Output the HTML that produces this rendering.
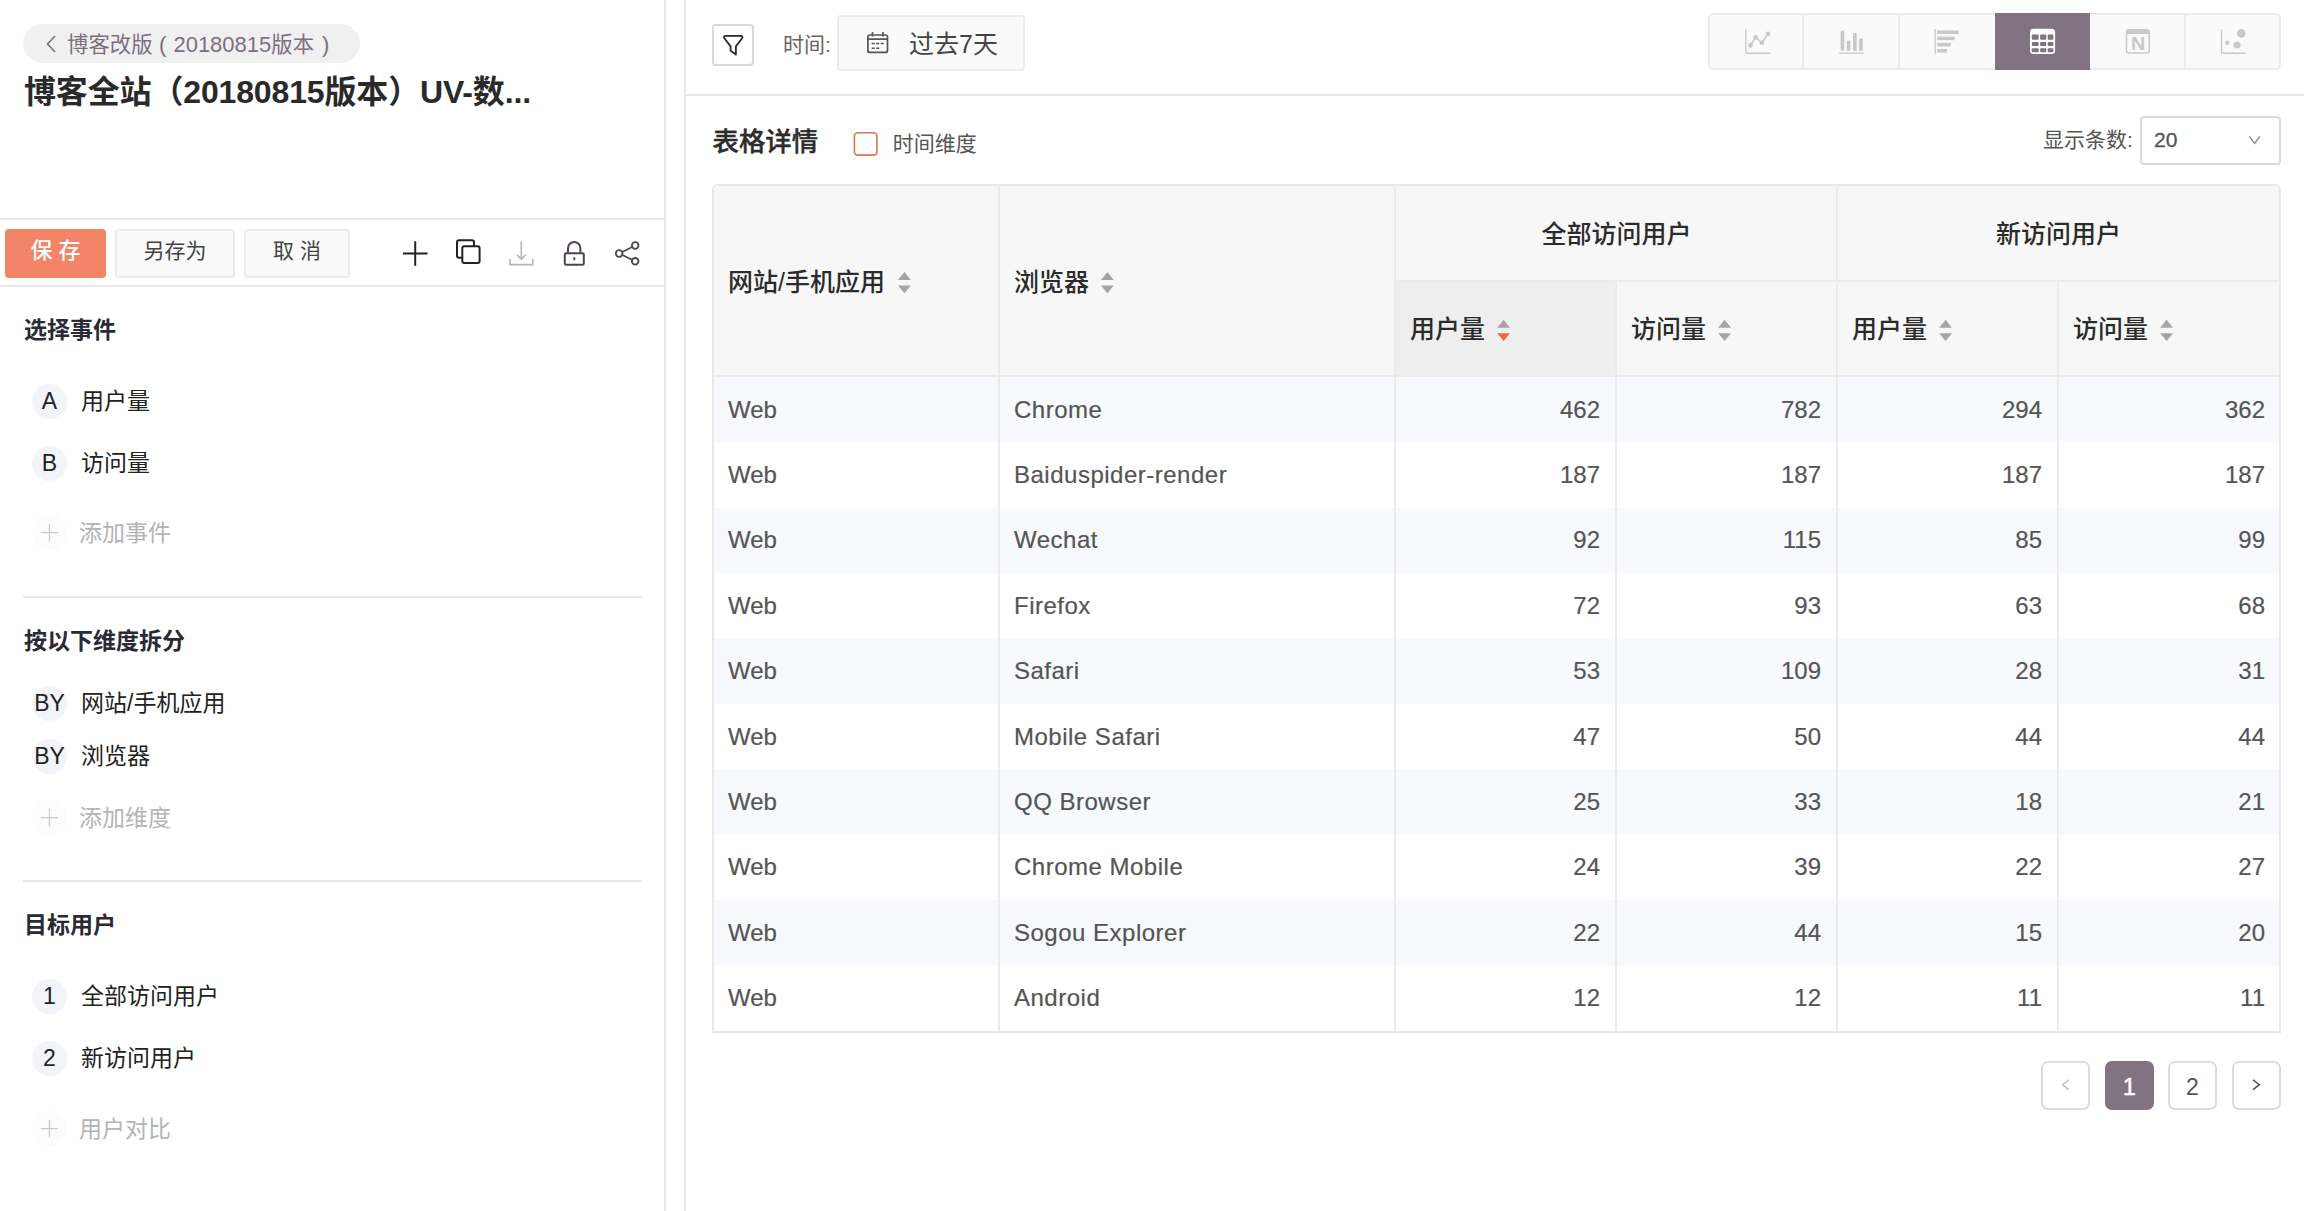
<!DOCTYPE html>
<html lang="zh-CN">
<head>
<meta charset="utf-8">
<title>博客全站（20180815版本）UV-数据</title>
<style>
*{box-sizing:border-box;margin:0;padding:0}
html,body{width:2304px;height:1211px;overflow:hidden;background:#fff}
body{position:relative;font-family:"Liberation Sans","Noto Sans CJK SC",sans-serif;color:#333}
.a{position:absolute}
.t{position:absolute;white-space:nowrap;line-height:40px;height:40px}
.b{font-weight:bold}
.line{position:absolute;background:#e7e7e7}
.circ{position:absolute;width:35px;height:35px;border-radius:50%;background:#f3f3fa;text-align:center;line-height:35px;font-size:23px;color:#222}
.circ.g{background:#fcfcfd}
.item{font-size:23px;color:#222}
.add{font-size:23px;color:#b4b4b4}
.sec{font-size:23px;font-weight:bold;color:#2a2a35}
.btn{position:absolute;top:229px;height:49px;border-radius:4px;font-size:21px;text-align:center;line-height:40px}
.btn.gray{background:#fafafa;border:2px solid #ececec;color:#444}
.td{position:absolute;font-size:24px;color:#555;-webkit-text-stroke:.2px #555;line-height:40px;height:40px;white-space:nowrap}
.br{letter-spacing:.5px}
.num{text-align:right}
.th{position:absolute;font-size:25px;color:#2b2b2b;font-weight:500;line-height:40px;height:40px;white-space:nowrap}
.pg{position:absolute;top:1061px;width:49px;height:49px;border:2px solid #dcdcdc;border-radius:7px;background:#fff;text-align:center;line-height:49px;font-size:23px;color:#555}
#ico{position:absolute;left:0;top:0;width:2304px;height:1211px;pointer-events:none}
</style>
</head>
<body>

<div class="line" style="left:664px;top:0;width:2px;height:1211px"></div>
<div class="line" style="left:684px;top:0;width:2px;height:1211px"></div>
<div class="a" style="left:23px;top:24px;width:337px;height:39px;border-radius:20px;background:#f0f0f0"></div>
<div class="t" style="left:67px;top:25px;font-size:22px;color:#7c6f80"><span style="font-size:21.400px">博客改版</span><span style="margin:0 7px 0 6.500px">(</span>20180815<span style="font-size:21.400px">版本</span><span style="margin:0 0 0 8px">)</span></div>
<div class="t b" style="left:24px;top:72px;font-size:32px;color:#2a2a2a;letter-spacing:-.15px">博客全站（20180815版本）UV-数...</div>
<div class="line" style="left:0;top:218px;width:664px;height:2px"></div>
<div class="line" style="left:0;top:285px;width:664px;height:2px"></div>
<div class="btn" style="left:5px;width:101px;background:#f38468;color:#fff;font-weight:500;font-size:22px;line-height:44px">保 存</div>
<div class="btn gray" style="left:115px;width:120px">另存为</div>
<div class="btn gray" style="left:244px;width:106px">取 消</div>
<div class="t sec" style="left:24px;top:310px">选择事件</div>
<div class="circ" style="left:32px;top:384px">A</div>
<div class="t item" style="left:81px;top:381px">用户量</div>
<div class="circ" style="left:32px;top:446px">B</div>
<div class="t item" style="left:81px;top:443px">访问量</div>
<div class="circ g" style="left:32px;top:515px"></div>
<div class="t add" style="left:79px;top:513px">添加事件</div>
<div class="line" style="left:23px;top:596px;width:619px;height:2px"></div>
<div class="t sec" style="left:24px;top:621px">按以下维度拆分</div>
<div class="circ" style="left:32px;top:686px">BY</div>
<div class="t item" style="left:81px;top:683px">网站/手机应用</div>
<div class="circ" style="left:32px;top:739px">BY</div>
<div class="t item" style="left:81px;top:736px">浏览器</div>
<div class="circ g" style="left:32px;top:800px"></div>
<div class="t add" style="left:79px;top:798px">添加维度</div>
<div class="line" style="left:23px;top:880px;width:619px;height:2px"></div>
<div class="t sec" style="left:24px;top:905px">目标用户</div>
<div class="circ" style="left:32px;top:979px">1</div>
<div class="t item" style="left:81px;top:976px">全部访问用户</div>
<div class="circ" style="left:32px;top:1041px">2</div>
<div class="t item" style="left:81px;top:1038px">新访问用户</div>
<div class="circ g" style="left:32px;top:1111px"></div>
<div class="t add" style="left:79px;top:1109px">用户对比</div>
<div class="line" style="left:686px;top:94px;width:1618px;height:2px"></div>
<div class="a" style="left:712px;top:24px;width:42px;height:42px;border:2px solid #d9d9d9;border-radius:4px;background:#fff"></div>
<div class="t" style="left:783px;top:25px;font-size:21px;color:#666">时间:</div>
<div class="a" style="left:837px;top:15px;width:188px;height:56px;border:2px solid #ececec;border-radius:4px;background:#fafafa"></div>
<div class="t" style="left:909px;top:23.500px;font-size:25px;color:#444">过去7天</div>
<div class="a" style="left:1708px;top:13px;width:573px;height:57px;border:2px solid #ebebeb;border-radius:5px;background:#fafafa"></div>
<div class="line" style="left:1802px;top:15px;width:2px;height:53px;background:#ebebeb"></div>
<div class="line" style="left:1898px;top:15px;width:2px;height:53px;background:#ebebeb"></div>
<div class="line" style="left:2184px;top:15px;width:2px;height:53px;background:#ebebeb"></div>
<div class="a" style="left:1995px;top:13px;width:95px;height:57px;background:#827383"></div>
<div class="t" style="left:712.500px;top:122px;font-size:26.400px;color:#2c2c2c;font-weight:500;-webkit-text-stroke:.4px #2c2c2c">表格详情</div>
<div class="t" style="left:892.700px;top:124px;font-size:21px;color:#555">时间维度</div>
<div class="t" style="left:2043px;top:119.500px;font-size:21px;color:#555">显示条数:</div>
<div class="a" style="left:2140px;top:116px;width:141px;height:49px;border:2px solid #dadada;border-radius:4px;background:#fff"></div>
<div class="t" style="left:2154px;top:119.500px;font-size:21px;color:#555;-webkit-text-stroke:.3px #555">20</div>
<div class="a" style="left:712px;top:184px;width:1569px;height:849px;border:2px solid #e8e8e8;border-radius:6px 6px 0 0;background:#fff"></div>
<div class="a" style="left:714px;top:186px;width:1565px;height:190px;background:#f7f7f7;border-radius:4px 4px 0 0"></div>
<div class="a" style="left:1396px;top:281px;width:220px;height:95px;background:#eeeeee"></div>
<div class="a" style="left:714px;top:377.0px;width:1565px;height:65.4px;background:#f8f9fd"></div>
<div class="a" style="left:714px;top:507.8px;width:1565px;height:65.4px;background:#f8f9fd"></div>
<div class="a" style="left:714px;top:638.6px;width:1565px;height:65.4px;background:#f8f9fd"></div>
<div class="a" style="left:714px;top:769.4px;width:1565px;height:65.4px;background:#f8f9fd"></div>
<div class="a" style="left:714px;top:900.2px;width:1565px;height:65.4px;background:#f8f9fd"></div>
<div class="line" style="left:714px;top:375px;width:1565px;height:2px;background:#ebebeb"></div>
<div class="line" style="left:1396px;top:280px;width:883px;height:2px;background:#ebebeb"></div>
<div class="line" style="left:998px;top:186px;width:2px;height:845px;background:#ebebeb"></div>
<div class="line" style="left:1394px;top:186px;width:2px;height:845px;background:#ebebeb"></div>
<div class="line" style="left:1836px;top:186px;width:2px;height:845px;background:#ebebeb"></div>
<div class="line" style="left:1615px;top:282px;width:2px;height:749px;background:#ebebeb"></div>
<div class="line" style="left:2057px;top:282px;width:2px;height:749px;background:#ebebeb"></div>
<div class="th" style="left:728px;top:262px">网站/手机应用</div>
<div class="th" style="left:1014px;top:262px">浏览器</div>
<div class="th" style="left:1396px;top:214px;width:441px;text-align:center">全部访问用户</div>
<div class="th" style="left:1838px;top:214px;width:441px;text-align:center">新访问用户</div>
<div class="th" style="left:1410px;top:309px">用户量</div>
<div class="th" style="left:1631px;top:309px">访问量</div>
<div class="th" style="left:1852px;top:309px">用户量</div>
<div class="th" style="left:2073px;top:309px">访问量</div>
<div class="td" style="left:728px;top:389.5px">Web</div>
<div class="td br" style="left:1014px;top:389.5px">Chrome</div>
<div class="td num" style="left:1400px;width:200px;top:389.5px">462</div>
<div class="td num" style="left:1621px;width:200px;top:389.5px">782</div>
<div class="td num" style="left:1842px;width:200px;top:389.5px">294</div>
<div class="td num" style="left:2065px;width:200px;top:389.5px">362</div>
<div class="td" style="left:728px;top:454.9px">Web</div>
<div class="td br" style="left:1014px;top:454.9px">Baiduspider-render</div>
<div class="td num" style="left:1400px;width:200px;top:454.9px">187</div>
<div class="td num" style="left:1621px;width:200px;top:454.9px">187</div>
<div class="td num" style="left:1842px;width:200px;top:454.9px">187</div>
<div class="td num" style="left:2065px;width:200px;top:454.9px">187</div>
<div class="td" style="left:728px;top:520.3px">Web</div>
<div class="td br" style="left:1014px;top:520.3px">Wechat</div>
<div class="td num" style="left:1400px;width:200px;top:520.3px">92</div>
<div class="td num" style="left:1621px;width:200px;top:520.3px">115</div>
<div class="td num" style="left:1842px;width:200px;top:520.3px">85</div>
<div class="td num" style="left:2065px;width:200px;top:520.3px">99</div>
<div class="td" style="left:728px;top:585.7px">Web</div>
<div class="td br" style="left:1014px;top:585.7px">Firefox</div>
<div class="td num" style="left:1400px;width:200px;top:585.7px">72</div>
<div class="td num" style="left:1621px;width:200px;top:585.7px">93</div>
<div class="td num" style="left:1842px;width:200px;top:585.7px">63</div>
<div class="td num" style="left:2065px;width:200px;top:585.7px">68</div>
<div class="td" style="left:728px;top:651.1px">Web</div>
<div class="td br" style="left:1014px;top:651.1px">Safari</div>
<div class="td num" style="left:1400px;width:200px;top:651.1px">53</div>
<div class="td num" style="left:1621px;width:200px;top:651.1px">109</div>
<div class="td num" style="left:1842px;width:200px;top:651.1px">28</div>
<div class="td num" style="left:2065px;width:200px;top:651.1px">31</div>
<div class="td" style="left:728px;top:716.5px">Web</div>
<div class="td br" style="left:1014px;top:716.5px">Mobile Safari</div>
<div class="td num" style="left:1400px;width:200px;top:716.5px">47</div>
<div class="td num" style="left:1621px;width:200px;top:716.5px">50</div>
<div class="td num" style="left:1842px;width:200px;top:716.5px">44</div>
<div class="td num" style="left:2065px;width:200px;top:716.5px">44</div>
<div class="td" style="left:728px;top:781.9px">Web</div>
<div class="td br" style="left:1014px;top:781.9px">QQ Browser</div>
<div class="td num" style="left:1400px;width:200px;top:781.9px">25</div>
<div class="td num" style="left:1621px;width:200px;top:781.9px">33</div>
<div class="td num" style="left:1842px;width:200px;top:781.9px">18</div>
<div class="td num" style="left:2065px;width:200px;top:781.9px">21</div>
<div class="td" style="left:728px;top:847.3px">Web</div>
<div class="td br" style="left:1014px;top:847.3px">Chrome Mobile</div>
<div class="td num" style="left:1400px;width:200px;top:847.3px">24</div>
<div class="td num" style="left:1621px;width:200px;top:847.3px">39</div>
<div class="td num" style="left:1842px;width:200px;top:847.3px">22</div>
<div class="td num" style="left:2065px;width:200px;top:847.3px">27</div>
<div class="td" style="left:728px;top:912.7px">Web</div>
<div class="td br" style="left:1014px;top:912.7px">Sogou Explorer</div>
<div class="td num" style="left:1400px;width:200px;top:912.7px">22</div>
<div class="td num" style="left:1621px;width:200px;top:912.7px">44</div>
<div class="td num" style="left:1842px;width:200px;top:912.7px">15</div>
<div class="td num" style="left:2065px;width:200px;top:912.7px">20</div>
<div class="td" style="left:728px;top:978.1px">Web</div>
<div class="td br" style="left:1014px;top:978.1px">Android</div>
<div class="td num" style="left:1400px;width:200px;top:978.1px">12</div>
<div class="td num" style="left:1621px;width:200px;top:978.1px">12</div>
<div class="td num" style="left:1842px;width:200px;top:978.1px">11</div>
<div class="td num" style="left:2065px;width:200px;top:978.1px">11</div>
<div class="pg" style="left:2041px"></div>
<div class="pg" style="left:2105px;background:#827383;border-color:#827383;color:#fff;-webkit-text-stroke:.6px #fff">1</div>
<div class="pg" style="left:2168px">2</div>
<div class="pg" style="left:2232px"></div>
<svg id="ico" width="2304" height="1211" viewBox="0 0 2304 1211">
<path d="M55 36 L47.5 44 L55 52" fill="none" stroke="#7c6f80" stroke-width="1.6"/>
<path d="M415.200 241.200V265.800M402.900 253.500H427.500" stroke="#222" stroke-width="2" fill="none"/>
<rect x="457" y="240.300" width="17" height="17.500" rx="2" fill="none" stroke="#222" stroke-width="2"/>
<rect x="462.300" y="246.200" width="17.300" height="16.700" rx="2" fill="#fff" stroke="#222" stroke-width="2"/>
<path d="M521.300 241.200V259M516.800 254.800L521.300 259.300L525.800 254.800M510 259V264.600H532.800V259" fill="none" stroke="#b8b2ba" stroke-width="1.600"/>
<path d="M568 252.500V248.200a6.200 6.200 0 0 1 12.400 0V252.500" fill="none" stroke="#4d4450" stroke-width="2"/>
<rect x="564.800" y="253.200" width="19" height="11.500" rx="1.500" fill="none" stroke="#4d4450" stroke-width="2"/>
<path d="M574.300 257.200v3" stroke="#4d4450" stroke-width="1.800"/>
<path d="M619.100 253.500L635.200 245.500M619.100 253.500L635.200 261.300" stroke="#4d4450" stroke-width="1.800" fill="none"/>
<circle cx="619.1" cy="253.5" r="3.300" fill="#fff" stroke="#4d4450" stroke-width="1.800"/>
<circle cx="635.2" cy="245.5" r="3.300" fill="#fff" stroke="#4d4450" stroke-width="1.800"/>
<circle cx="635.2" cy="261.3" r="3.300" fill="#fff" stroke="#4d4450" stroke-width="1.800"/>
<path d="M49.500 524V541.2M40.800 532.6H58" stroke="#c9c9c9" stroke-width="1.300" fill="none"/>
<path d="M49.500 809V826.2M40.800 817.6H58" stroke="#c9c9c9" stroke-width="1.300" fill="none"/>
<path d="M49.500 1120V1137.2M40.800 1128.6H58" stroke="#c9c9c9" stroke-width="1.300" fill="none"/>
<path d="M725.500 35.800H741a1.500 1.500 0 0 1 1.100 2.500L735.900 46.400V54.600L730.600 50.800V46.400L724.400 38.300a1.500 1.500 0 0 1 1.100-2.500z" fill="none" stroke="#2a2a2a" stroke-width="1.800" stroke-linejoin="round"/>
<rect x="867.900" y="35" width="19.600" height="17.400" rx="2" fill="none" stroke="#555" stroke-width="1.700"/>
<path d="M868 39.200H887.500M872.500 32V36.500M883 32V36.500" stroke="#555" stroke-width="1.700" fill="none"/>
<path d="M871.700 43.600h3M876.200 43.600h3M880.700 43.600h3M871.700 48.200h3M876.200 48.200h3" stroke="#555" stroke-width="1.500"/>
<path d="M1745.800 29V52a1.200 1.200 0 0 0 1.200 1.200H1770.300" fill="none" stroke="#c9c9c9" stroke-width="1.400"/>
<path d="M1750.500 45.400L1755.600 37.300L1761.800 42.800L1768.100 33.900" fill="none" stroke="#c9c9c9" stroke-width="1.500"/>
<circle cx="1750.5" cy="45.4" r="2.300" fill="#c9c9c9"/>
<circle cx="1755.6" cy="37.3" r="2.300" fill="#c9c9c9"/>
<circle cx="1761.8" cy="42.8" r="2.300" fill="#c9c9c9"/>
<circle cx="1768.1" cy="33.9" r="2.300" fill="#c9c9c9"/>
<path d="M1839.300 53.200H1863.800" stroke="#c9c9c9" stroke-width="1.300"/>
<rect x="1840.6" y="30.4" width="3.700" height="20.5" rx="1.300" fill="#c9c9c9"/>
<rect x="1846.7" y="40.8" width="3.700" height="10.1" rx="1.300" fill="#c9c9c9"/>
<rect x="1853" y="33" width="3.700" height="17.9" rx="1.300" fill="#c9c9c9"/>
<rect x="1859.1" y="38.2" width="3.700" height="12.7" rx="1.300" fill="#c9c9c9"/>
<path d="M1935.200 29V53.800" stroke="#c9c9c9" stroke-width="1.300"/>
<rect x="1937.200" y="30.4" width="21.3" height="3.600" fill="#c9c9c9"/>
<rect x="1937.200" y="36.6" width="17.4" height="3.600" fill="#c9c9c9"/>
<rect x="1937.200" y="42.8" width="13.7" height="3.600" fill="#c9c9c9"/>
<rect x="1937.200" y="49" width="9.8" height="3.600" fill="#c9c9c9"/>
<rect x="2030" y="28.800" width="25.100" height="25.300" rx="3.500" fill="#fff"/>
<rect x="2031.8" y="34.4" width="6.9" height="5.4" rx="1" fill="#827383"/>
<rect x="2031.8" y="42.1" width="6.9" height="4" rx="1" fill="#827383"/>
<rect x="2031.8" y="48.2" width="6.9" height="4" rx="1" fill="#827383"/>
<rect x="2040.1" y="34.4" width="6.2" height="5.4" rx="1" fill="#827383"/>
<rect x="2040.1" y="42.1" width="6.2" height="4" rx="1" fill="#827383"/>
<rect x="2040.1" y="48.2" width="6.2" height="4" rx="1" fill="#827383"/>
<rect x="2047.7" y="34.4" width="5.7" height="5.4" rx="1" fill="#827383"/>
<rect x="2047.7" y="42.1" width="5.7" height="4" rx="1" fill="#827383"/>
<rect x="2047.7" y="48.2" width="5.7" height="4" rx="1" fill="#827383"/>
<rect x="2126.500" y="29.800" width="22.700" height="23.300" rx="2" fill="none" stroke="#c9c9c9" stroke-width="1.500"/>
<path d="M2126.500 34V31.800a2 2 0 0 1 2-2h18.700a2 2 0 0 1 2 2V34z" fill="#c9c9c9"/>
<text transform="translate(2138.150 50) scale(1.130 1)" text-anchor="middle" font-family="Liberation Sans, sans-serif" font-weight="bold" font-size="17.500" fill="#c9c9c9">N</text>
<path d="M2221.500 29V52a1.200 1.200 0 0 0 1.200 1.200H2245.500" fill="none" stroke="#c9c9c9" stroke-width="1.400"/>
<circle cx="2241.300" cy="33.400" r="4.300" fill="#c9c9c9"/><circle cx="2237" cy="45" r="3.600" fill="#c9c9c9"/><circle cx="2227.200" cy="42.800" r="2.200" fill="#c9c9c9"/>
<rect x="854.400" y="132.700" width="22.500" height="22.400" rx="3.500" fill="#fff" stroke="#e3714f" stroke-width="1.600"/>
<path d="M2249.300 136.300L2254.600 143.300L2259.900 136.300" fill="none" stroke="#8a8a8a" stroke-width="1.400"/>
<path d="M904.4 272L910.8 280H898z" fill="#a4a4a4"/>
<path d="M898 285.4H910.8L904.4 293.2z" fill="#a4a4a4"/>
<path d="M1107.4 272L1113.8 280H1101z" fill="#a4a4a4"/>
<path d="M1101 285.4H1113.8L1107.4 293.2z" fill="#a4a4a4"/>
<path d="M1503.6 319.8L1510.0 327.8H1497.2z" fill="#a4a4a4"/>
<path d="M1497.2 333.2H1510.0L1503.6 341.0z" fill="#e9694a"/>
<path d="M1724.6 319.8L1731.0 327.8H1718.2z" fill="#a4a4a4"/>
<path d="M1718.2 333.2H1731.0L1724.6 341.0z" fill="#a4a4a4"/>
<path d="M1945.6 319.8L1952.0 327.8H1939.2z" fill="#a4a4a4"/>
<path d="M1939.2 333.2H1952.0L1945.6 341.0z" fill="#a4a4a4"/>
<path d="M2166.6 319.8L2173.0 327.8H2160.2z" fill="#a4a4a4"/>
<path d="M2160.2 333.2H2173.0L2166.6 341.0z" fill="#a4a4a4"/>
<path d="M2068.800 1079.800L2062.600 1084.700L2068.800 1089.600" fill="none" stroke="#bdbdbd" stroke-width="1.400"/>
<path d="M2253 1079.800L2259.300 1084.700L2253 1089.600" fill="none" stroke="#555" stroke-width="1.500"/>
</svg>
</body>
</html>
